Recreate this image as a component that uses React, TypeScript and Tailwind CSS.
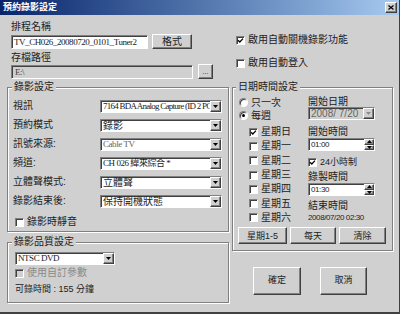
import React from "react";

const raised =
  "border border-white border-r-[#404040] border-b-[#404040] shadow-[inset_-1px_-1px_0_#808080] bg-[#d0d0d0]";
const sunken =
  "border border-[#808080] border-r-white border-b-white shadow-[inset_1px_1px_0_#404040]";
const group =
  "border border-[#808080] shadow-[1px_1px_0_#ffffff,inset_1px_1px_0_#ffffff]";
const legend = "px-[2px] text-[10px] leading-[12px] bg-[#d0d0d0]";
const serif = "font-['Liberation_Serif','Noto_Sans_CJK_TC',serif] text-[9px] tracking-[-0.45px]";
const serifTight = "font-['Liberation_Serif','Noto_Sans_CJK_TC',serif] text-[9px] tracking-[-0.75px]";
const small = "font-['Liberation_Sans',sans-serif] text-[8px] tracking-[-0.4px]";

function Tri({ up = false, gray = false }: { up?: boolean; gray?: boolean }) {
  return (
    <svg width="5" height="3" viewBox="0 0 5 3" className="block">
      <polygon
        points={up ? "0,3 5,3 2.5,0" : "0,0 5,0 2.5,3"}
        fill={gray ? "#8c8c8c" : "#000"}
      />
    </svg>
  );
}

function Check({ checked = false, disabled = false }: { checked?: boolean; disabled?: boolean }) {
  return (
    <span
      className={`${sunken} ${disabled ? "bg-[#d0d0d0]" : "bg-white"} w-[9px] h-[9px] flex items-center justify-center shrink-0`}
    >
      {checked && (
        <svg width="7" height="7" viewBox="0 0 7 7">
          <path d="M1 3.2 L2.8 5 L6 1.6" stroke="#000" strokeWidth="1.3" fill="none" />
        </svg>
      )}
    </span>
  );
}

function Radio({ checked = false }: { checked?: boolean }) {
  return (
    <span className="w-[9px] h-[9px] rounded-full bg-white border border-[#808080] border-r-white border-b-white shadow-[inset_1px_1px_0_#404040] flex items-center justify-center shrink-0">
      {checked && <span className="w-[3px] h-[3px] rounded-full bg-black" />}
    </span>
  );
}

function Combo({
  text,
  width,
  latin = false,
  tight = false,
  dim = false,
  disabled = false,
}: {
  text: string;
  width: string;
  latin?: boolean;
  tight?: boolean;
  dim?: boolean;
  disabled?: boolean;
}) {
  const face = tight ? serifTight : latin ? serif : "text-[10px]";
  return (
    <div
      className={`${sunken} ${width} ${disabled ? "bg-[#d0d0d0]" : "bg-white"} h-[13px] flex items-stretch`}
    >
      <div
        className={`flex-1 overflow-hidden whitespace-nowrap pl-[2px] leading-[11px] ${face} ${
          dim || disabled ? "text-[#666]" : "text-[#222]"
        }`}
      >
        {text}
      </div>
      <div className={`${raised} w-[11px] flex items-center justify-center`}>
        <Tri gray={disabled} />
      </div>
    </div>
  );
}

function Spin({ value }: { value: string }) {
  return (
    <div className={`${sunken} bg-white w-[67px] h-[13px] flex items-stretch`}>
      <div className={`flex-1 pl-[2px] leading-[11px] ${small}`}>{value}</div>
      <div className="w-[10px] flex flex-col">
        <div className={`${raised} flex-1 flex items-center justify-center`}>
          <Tri up />
        </div>
        <div className={`${raised} flex-1 flex items-center justify-center`}>
          <Tri />
        </div>
      </div>
    </div>
  );
}

const recordRows = [
  { label: "視訊", text: "7164 BDA Analog Capture (ID 2 PC", latin: true, tight: true },
  { label: "預約模式", text: "錄影" },
  { label: "訊號來源:", text: "Cable TV", latin: true, dim: true },
  { label: "頻道:", text: "CH 026 緯來綜合 *", latin: true },
  { label: "立體聲模式:", text: "立體聲" },
  { label: "錄影結束後:", text: "保持開機狀態" },
];

const weekdays = ["星期日", "星期一", "星期二", "星期三", "星期四", "星期五", "星期六"];

export default function App() {
  return (
    <div className="w-[400px] h-[314px] bg-[#d0d0d0] border-b-2 border-b-[#404040] border-r border-r-[#404040] flex flex-col overflow-hidden text-[#222] font-['Liberation_Sans','Noto_Sans_CJK_TC',sans-serif]">
      {/* title bar */}
      <div className="h-[15px] shrink-0 flex items-center justify-between bg-linear-to-r from-[#0a246a] to-[#a6caf0]">
        <span className="pl-[3px] text-[9px] font-bold text-white leading-[15px]">預約錄影設定</span>
        <span className={`${raised} mr-[2px] w-[12px] h-[11px] flex items-center justify-center`}>
          <svg width="6" height="5" viewBox="0 0 6 5">
            <path d="M0.5 0.5 L5.5 4.5 M5.5 0.5 L0.5 4.5" stroke="#000" strokeWidth="1.2" />
          </svg>
        </span>
      </div>

      <div className="grid grid-cols-[222px_159px] gap-x-[3px] pl-[7px]">
        {/* left column */}
        <div className="flex flex-col">
          <div className="mt-[6px] pl-[4px] h-[12px] leading-[12px] text-[10px]">排程名稱</div>
          <div className="mt-[1px] pl-[4px] flex items-center gap-[4px]">
            <div className={`${sunken} bg-white w-[137px] h-[14px] pl-[2px] leading-[12px] overflow-hidden whitespace-nowrap ${serif}`}>
              TV_CH026_20080720_0101_Tuner2
            </div>
            <button className={`${raised} w-[40px] h-[15px] text-[10px] leading-[12px]`}>格式</button>
          </div>
          <div className="mt-[3px] pl-[4px] h-[12px] leading-[12px] text-[10px]">存檔路徑</div>
          <div className="pl-[4px] flex items-center gap-[5px]">
            <div className={`${sunken} w-[182px] h-[14px] pl-[3px] leading-[12px] ${serif} text-[#444]`}>
              E:\
            </div>
            <button className={`${raised} w-[15px] h-[15px] text-[7px] leading-[8px]`}>...</button>
          </div>

          <fieldset className={`${group} mt-[2px] pl-[5px] pr-[6px] pt-[6px] pb-[3px]`}>
            <legend className={`${legend} -ml-[1px]`}>錄影設定</legend>
            <div className="flex flex-col gap-[5px]">
              {recordRows.map((r) => (
                <div key={r.label} className="flex items-center h-[14px]">
                  <div className="w-[87px] text-[10px] leading-[12px]">{r.label}</div>
                  <Combo text={r.text} width="w-[122px]" latin={r.latin} tight={r.tight} dim={r.dim} />
                </div>
              ))}
            </div>
            <div className="mt-[8px] h-[12px] pl-[2px] flex items-center gap-[3px]">
              <Check />
              <span className="text-[10px] leading-[12px]">錄影時靜音</span>
            </div>
          </fieldset>

          <fieldset className={`${group} mt-[4px] pl-[7px] pr-[6px] pt-[4px] pb-[7px]`}>
            <legend className={`${legend} -ml-[3px]`}>錄影品質設定</legend>
            <Combo text="NTSC DVD" width="w-[100px]" latin />
            <div className="mt-[2px] h-[12px] flex items-center gap-[3px]">
              <Check disabled />
              <span className="text-[10px] leading-[12px] text-[#8a8a8a]">使用自訂參數</span>
            </div>
            <div className="mt-[4px] h-[12px] text-[9px] leading-[12px]">可錄時間 : 155 分鐘</div>
          </fieldset>
        </div>

        {/* right column */}
        <div className="flex flex-col">
          <div className="mt-[19px] h-[12px] pl-[4px] flex items-center gap-[3px]">
            <Check checked />
            <span className="text-[10px] leading-[12px]">啟用自動關機錄影功能</span>
          </div>
          <div className="mt-[11px] h-[12px] pl-[4px] flex items-center gap-[3px]">
            <Check />
            <span className="text-[10px] leading-[12px]">啟用自動登入</span>
          </div>

          <fieldset className={`${group} mt-[12px] pl-[6px] pr-[6px] pt-[3px] pb-[6px]`}>
            <legend className={`${legend} -ml-[3px]`}>日期時間設定</legend>
            <div className="grid grid-cols-[69px_67px]">
              <div className="flex flex-col">
                <div className="h-[13px] flex items-center gap-[3px]">
                  <Radio />
                  <span className="text-[10px] leading-[12px]">只一次</span>
                </div>
                <div className="h-[13px] flex items-center gap-[3px]">
                  <Radio checked />
                  <span className="text-[10px] leading-[12px]">每週</span>
                </div>
                <div className="mt-[3px] pl-[10px] flex flex-col">
                  {weekdays.map((d, i) => (
                    <div key={d} className="h-[14.3px] flex items-center gap-[3px]">
                      <Check checked={i === 0} />
                      <span className="text-[10px] leading-[12px]">{d}</span>
                    </div>
                  ))}
                </div>
              </div>
              <div className="flex flex-col">
                <div className="mt-[1px] h-[10px] leading-[10px] text-[10px]">開始日期</div>
                <Combo text="2008/ 7/20" width="w-[67px]" disabled />
                <div className="mt-[7px] h-[10px] leading-[10px] text-[10px]">開始時間</div>
                <div className="mt-[1px]">
                  <Spin value="01:00" />
                </div>
                <div className="mt-[5px] h-[12px] flex items-center gap-[3px]">
                  <Check checked />
                  <span className="text-[9px] leading-[12px]">24小時制</span>
                </div>
                <div className="mt-[4px] h-[10px] leading-[10px] text-[10px]">錄製時間</div>
                <div className="mt-[1px]">
                  <Spin value="01:30" />
                </div>
                <div className="mt-[5px] h-[10px] leading-[10px] text-[10px]">結束時間</div>
                <div className={`mt-[2px] h-[10px] leading-[10px] ${small}`}>2008/07/20 02:30</div>
              </div>
            </div>
            <div className="mt-[2px] -ml-[1px] flex gap-[3px]">
              <button className={`${raised} w-[49px] h-[17px] text-[9px] leading-[12px]`}>星期1-5</button>
              <button className={`${raised} w-[46px] h-[17px] text-[9px] leading-[12px]`}>每天</button>
              <button className={`${raised} w-[47px] h-[17px] text-[9px] leading-[12px]`}>清除</button>
            </div>
          </fieldset>

          <div className="mt-[16px] pl-[21px] flex gap-[19px]">
            <button className={`${raised} w-[48px] h-[28px] text-[9px]`}>確定</button>
            <button className={`${raised} w-[47px] h-[28px] text-[9px]`}>取消</button>
          </div>
        </div>
      </div>
    </div>
  );
}
